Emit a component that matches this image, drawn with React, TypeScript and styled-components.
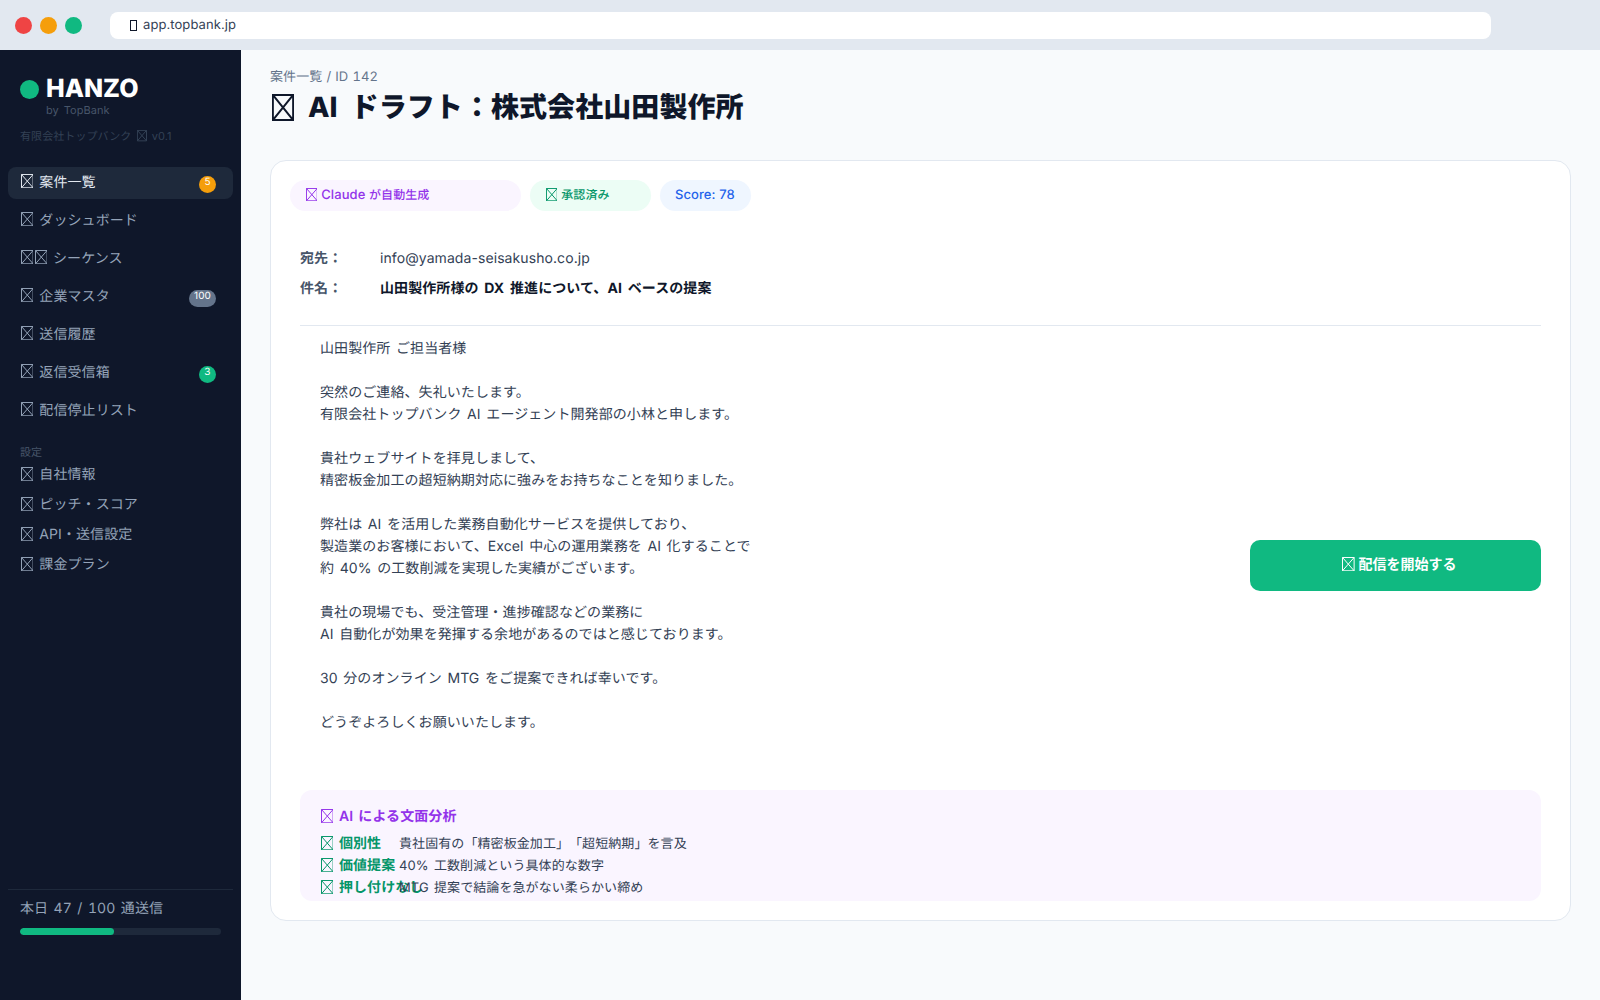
import React from "react";
import styled, { createGlobalStyle } from "styled-components";

const Global = createGlobalStyle`
  html, body { margin: 0; padding: 0; height: 100%; }
  body {
    font-family: Inter, "Noto Sans CJK JP", sans-serif;
    background: #f8fafc;
    text-rendering: geometricPrecision;
    text-spacing-trim: space-all;
    letter-spacing: 0.005em;
    word-spacing: 0.1em;
  }
  * { box-sizing: border-box; }
`;

const Page = styled.div`
  width: 1600px;
  height: 1000px;
  display: flex;
  flex-direction: column;
  overflow: hidden;
`;

const BrowserBar = styled.header`
  height: 50px;
  flex: none;
  background: #e2e8f0;
  display: flex;
  align-items: center;
  padding: 0 109px 0 15px;
`;

const Dot = styled.span<{ $color: string }>`
  width: 17px;
  height: 17px;
  border-radius: 50%;
  margin-right: 8px;
  background: ${(p) => p.$color};
`;

const Address = styled.div`
  flex: 1;
  margin-left: 20px;
  height: 27px;
  border-radius: 8px;
  background: #fff;
  padding-left: 20px;
  display: flex;
  align-items: center;
  font-size: 13px;
  color: #334155;
`;

const LockBox = styled.span`
  width: 7px;
  height: 11px;
  margin-right: 6px;
  border: 1px solid #0f172a;
`;

const TofuSvg = styled.svg`
  display: inline-block;
  width: 0.9em;
  height: 1.02em;
  margin: 0 0.02em 0 0.06em;
  vertical-align: -0.14em;
  fill: none;
  stroke: currentColor;
  stroke-width: 1;
`;

const Tofu = () => (
  <TofuSvg viewBox="0 0 13 15" preserveAspectRatio="none" aria-hidden="true">
    <path d="M.5.5h12v14H.5zM.5.5l12 14M12.5.5L.5 14.5" vectorEffect="non-scaling-stroke" />
  </TofuSvg>
);

const Body = styled.div`
  flex: 1;
  display: flex;
  min-height: 0;
`;

const Sidebar = styled.aside`
  width: 241px;
  flex: none;
  background: #0f172a;
  display: flex;
  flex-direction: column;
  padding: 27px 8px 0;
`;

const Brand = styled.div`
  display: flex;
  align-items: center;
  gap: 7px;
  padding-left: 12px;
  height: 24px;
`;

const BrandDot = styled.span`
  width: 19px;
  height: 19px;
  border-radius: 50%;
  background: #10b981;
`;

const BrandName = styled.span`
  font-size: 25px;
  font-weight: 800;
  color: #fff;
  letter-spacing: 0;
`;

const BrandSub = styled.div`
  margin: 1px 0 0 38px;
  font-size: 11px;
  line-height: 16px;
  color: #475569;
`;

const Company = styled.div`
  margin: 10px 0 0 12px;
  font-size: 11px;
  line-height: 16px;
  color: #334155;
`;

const NavList = styled.nav`
  margin-top: 23px;
  display: flex;
  flex-direction: column;
  gap: 6px;
`;

const NavItem = styled.div<{ $active?: boolean }>`
  height: 32px;
  display: flex;
  align-items: center;
  justify-content: space-between;
  padding: 0 17px 3px 12px;
  border-radius: 8px;
  font-size: 14px;
  color: ${(p) => (p.$active ? "#e2e8f0" : "#94a3b8")};
  background: ${(p) => (p.$active ? "#1e293b" : "transparent")};
`;

const Badge = styled.span<{ $color: string }>`
  min-width: 17px;
  height: 17px;
  padding: 0 5px 3px;
  margin-top: 5px;
  border-radius: 9px;
  background: ${(p) => p.$color};
  color: #fff;
  font-size: 10px;
  line-height: 13px;
  text-align: center;
`;

const SectionLabel = styled.div`
  margin: 18px 0 0 12px;
  font-size: 11px;
  line-height: 14px;
  color: #475569;
`;

const SubList = styled.div`
  margin-top: 5px;
  display: flex;
  flex-direction: column;
  gap: 8px;
`;

const SubItem = styled.div`
  height: 22px;
  padding-left: 12px;
  font-size: 14px;
  line-height: 22px;
  color: #94a3b8;
`;

const Usage = styled.div`
  margin-top: auto;
  margin-bottom: 65px;
  border-top: 1px solid #1e293b;
  padding: 8px 12px 0;
`;

const UsageText = styled.div`
  font-size: 14px;
  line-height: 22px;
  color: #94a3b8;
  font-variant-numeric: tabular-nums;
`;

const Track = styled.div`
  margin-top: 8px;
  height: 7px;
  width: 201px;
  border-radius: 4px;
  background: #1e293b;
  overflow: hidden;
`;

const Fill = styled.div`
  height: 100%;
  border-radius: 4px;
  background: #10b981;
`;

const Main = styled.main`
  flex: 1;
  min-width: 0;
  background: #f8fafc;
  padding: 19px 29px 0 29px;
`;

const Crumb = styled.div`
  font-size: 13px;
  line-height: 16px;
  color: #64748b;
  font-variant-numeric: tabular-nums;
  word-spacing: 0.04em;
`;

const Title = styled.h1`
  margin: 2px 0 0;
  font-size: 28px;
  line-height: 40px;
  font-weight: 800;
  color: #0f172a;
  word-spacing: 0.24em;

  ${TofuSvg} {
    width: 22px;
    height: 27px;
    margin: 0 1px 0 2px;
    vertical-align: -4px;
    stroke-width: 2;
  }
`;

const Card = styled.section`
  margin-top: 33px;
  height: 761px;
  background: #fff;
  border: 1px solid #e2e8f0;
  border-radius: 16px;
  padding: 19px 29px 0;
`;

const Chips = styled.div`
  display: flex;
  gap: 9px;
  margin-left: -10px;
`;

const Chip = styled.span<{ $bg: string; $fg: string; $width: number }>`
  width: ${(p) => p.$width}px;
  height: 31px;
  padding: 0 15px;
  border-radius: 16px;
  display: block;
  line-height: 30px;
  font-size: 13px;
  font-weight: 500;
  white-space: nowrap;
  word-spacing: 0;
  background: ${(p) => p.$bg};
  color: ${(p) => p.$fg};
`;

const ChipCjk = styled.span`
  font-size: 12px;
`;

const Meta = styled.div`
  margin-top: 37px;
  display: flex;
  flex-direction: column;
  gap: 8px;
  padding-bottom: 25px;
  border-bottom: 1px solid #e2e8f0;
`;

const MetaRow = styled.div`
  display: flex;
  font-size: 14px;
  line-height: 22px;
`;

const MetaLabel = styled.span`
  width: 80px;
  font-weight: 600;
  color: #475569;
`;

const MetaValue = styled.span<{ $strong?: boolean }>`
  font-weight: ${(p) => (p.$strong ? 700 : 400)};
  word-spacing: ${(p) => (p.$strong ? "0.17em" : "inherit")};
  color: ${(p) => (p.$strong ? "#0f172a" : "#334155")};
`;

const Content = styled.div`
  display: flex;
  justify-content: space-between;
  height: 464px;
`;

const Letter = styled.div`
  margin: 12px 0 0 20px;
  font-size: 14px;
  line-height: 22px;
  color: #334155;
  white-space: pre-line;
`;

const StartButton = styled.button`
  margin-top: 214px;
  width: 291px;
  height: 51px;
  border: 0;
  border-radius: 10px;
  padding: 0 0 5px 7px;
  background: #10b981;
  color: #fff;
  font: inherit;
  font-size: 14px;
  font-weight: 600;
`;

const Analysis = styled.div`
  height: 111px;
  border-radius: 12px;
  background: #faf5ff;
  padding: 16px 20px 0;
`;

const AnalysisTitle = styled.div`
  font-size: 14px;
  line-height: 22px;
  font-weight: 600;
  color: #9333ea;
  margin-bottom: 5px;
`;

const AnalysisRow = styled.div`
  display: grid;
  grid-template-columns: 79px 1fr;
  height: 22px;
  line-height: 22px;
`;

const AnalysisLabel = styled.span`
  font-size: 14px;
  font-weight: 600;
  color: #059669;
  white-space: nowrap;
`;

const AnalysisValue = styled.span`
  font-size: 13px;
  color: #334155;
`;

const nav = [
  { label: "案件一覧", icons: 1, active: true, badge: "5", color: "#f59e0b" },
  { label: "ダッシュボード", icons: 1 },
  { label: "シーケンス", icons: 2 },
  { label: "企業マスタ", icons: 1, badge: "100", color: "#64748b" },
  { label: "送信履歴", icons: 1 },
  { label: "返信受信箱", icons: 1, badge: "3", color: "#10b981" },
  { label: "配信停止リスト", icons: 1 },
];

const settings = ["自社情報", "ピッチ・スコア", "API・送信設定", "課金プラン"];

const letter = `山田製作所 ご担当者様

突然のご連絡、失礼いたします。
有限会社トップバンク AI エージェント開発部の小林と申します。

貴社ウェブサイトを拝見しまして、
精密板金加工の超短納期対応に強みをお持ちなことを知りました。

弊社は AI を活用した業務自動化サービスを提供しており、
製造業のお客様において、Excel 中心の運用業務を AI 化することで
約 40% の工数削減を実現した実績がございます。

貴社の現場でも、受注管理・進捗確認などの業務に
AI 自動化が効果を発揮する余地があるのではと感じております。

30 分のオンライン MTG をご提案できれば幸いです。

どうぞよろしくお願いいたします。`;

const analysis = [
  ["個別性", "貴社固有の「精密板金加工」「超短納期」を言及"],
  ["価値提案", "40% 工数削減という具体的な数字"],
  ["押し付けなし", "MTG 提案で結論を急がない柔らかい締め"],
];

export default function App() {
  return (
    <Page>
      <Global />
      <BrowserBar>
        <Dot $color="#ef4444" />
        <Dot $color="#f59e0b" />
        <Dot $color="#10b981" />
        <Address>
          <LockBox />
          app.topbank.jp
        </Address>
      </BrowserBar>
      <Body>
        <Sidebar>
          <Brand>
            <BrandDot />
            <BrandName>HANZO</BrandName>
          </Brand>
          <BrandSub>by TopBank</BrandSub>
          <Company>
            有限会社トップバンク <Tofu /> v0.1
          </Company>
          <NavList>
            {nav.map((n) => (
              <NavItem key={n.label} $active={n.active}>
                <span>
                  {n.icons === 2 && <Tofu />}
                  <Tofu /> {n.label}
                </span>
                {n.badge && <Badge $color={n.color!}>{n.badge}</Badge>}
              </NavItem>
            ))}
          </NavList>
          <SectionLabel>設定</SectionLabel>
          <SubList>
            {settings.map((s) => (
              <SubItem key={s}>
                <Tofu /> {s}
              </SubItem>
            ))}
          </SubList>
          <Usage>
            <UsageText>本日 47 / 100 通送信</UsageText>
            <Track>
              <Fill style={{ width: "47%" }} />
            </Track>
          </Usage>
        </Sidebar>
        <Main>
          <Crumb>案件一覧 / ID 142</Crumb>
          <Title>
            <Tofu /> AI ドラフト：株式会社山田製作所
          </Title>
          <Card>
            <Chips>
              <Chip $bg="#faf5ff" $fg="#9333ea" $width={231}>
                <Tofu /> Claude <ChipCjk>が自動生成</ChipCjk>
              </Chip>
              <Chip $bg="#ecfdf5" $fg="#059669" $width={121}>
                <Tofu /> <ChipCjk>承認済み</ChipCjk>
              </Chip>
              <Chip $bg="#eff6ff" $fg="#2563eb" $width={91}>
                Score: 78
              </Chip>
            </Chips>
            <Meta>
              <MetaRow>
                <MetaLabel>宛先：</MetaLabel>
                <MetaValue>info@yamada-seisakusho.co.jp</MetaValue>
              </MetaRow>
              <MetaRow>
                <MetaLabel>件名：</MetaLabel>
                <MetaValue $strong>山田製作所様の DX 推進について、AI ベースの提案</MetaValue>
              </MetaRow>
            </Meta>
            <Content>
              <Letter>{letter}</Letter>
              <StartButton>
                <Tofu /> 配信を開始する
              </StartButton>
            </Content>
            <Analysis>
              <AnalysisTitle>
                <Tofu /> AI による文面分析
              </AnalysisTitle>
              {analysis.map(([k, v]) => (
                <AnalysisRow key={k}>
                  <AnalysisLabel>
                    <Tofu /> {k}
                  </AnalysisLabel>
                  <AnalysisValue>{v}</AnalysisValue>
                </AnalysisRow>
              ))}
            </Analysis>
          </Card>
        </Main>
      </Body>
    </Page>
  );
}
